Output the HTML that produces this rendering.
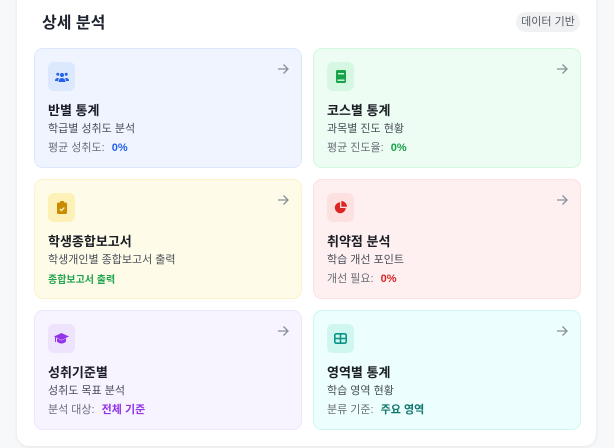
<!DOCTYPE html>
<html><head><meta charset="utf-8"><style>
*{box-sizing:border-box;margin:0;padding:0}
body{width:614px;height:448px;background:#f7f8fa;font-family:"Liberation Sans","Noto Sans CJK KR",sans-serif;position:relative;overflow:hidden}
.main{position:absolute;left:17px;top:-12px;width:579px;height:458px;background:#fff;border-radius:12px;box-shadow:0 1px 4px rgba(0,0,0,.08)}
h2{position:absolute;left:42px;top:9px;font-size:16px;font-weight:700;color:#1f2430}
.pill{position:absolute;left:516px;top:12px;width:64px;height:20px;border-radius:10px;background:#f0f1f3;color:#555b66;font-size:11px;line-height:20px;text-align:center}
.card{position:absolute;width:268px;height:120px;border-radius:9px;border:1px solid}
.ic{position:absolute;left:13px;top:13px;width:27px;height:29px;border-radius:6px;display:flex;align-items:center;justify-content:center}
.ar{position:absolute;right:12px;top:13px}
.t{position:absolute;left:13px;top:51px;font-size:13px;font-weight:700;color:#1a1d24}
.s{position:absolute;left:13px;top:71px;font-size:11px;color:#4a4f59}
.v{position:absolute;left:13px;top:90px;font-size:11px;color:#6b7079}
.v b{margin-left:4px}
</style></head><body>
<div class="main"></div>
<h2>상세 분석</h2>
<div class="pill">데이터 기반</div>

<div class="card" style="left:34px;top:48px;background:#eff4ff;border-color:#dce7fd">
<div class="ic" style="background:#dbe8fe"><svg width="14" height="10" viewBox="0 0 14 10"><g fill="#2563eb"><circle cx="7" cy="3" r="2"/><circle cx="2.8" cy="2.3" r="1.5"/><circle cx="11.2" cy="2.3" r="1.5"/><path d="M3.5 10c0-2.5 1.5-4 3.5-4s3.5 1.5 3.5 4z"/><path d="M0 9c0-2 1-3 2.8-3 .6 0 1 .1 1.3.3C3.4 7 3 8 3 9z"/><path d="M14 9c0-2-1-3-2.8-3-.6 0-1 .1-1.3.3.7.7 1.1 1.7 1.1 2.7z"/></g></svg></div>
<div class="ar"><svg width="12" height="12" viewBox="0 0 12 12"><path d="M1 6h10M6.5 1.5L11 6l-4.5 4.5" stroke="#8a8f99" stroke-width="1.3" fill="none"/></svg></div><div class="t">반별 통계</div><div class="s">학급별 성취도 분석</div><div class="v">평균 성취도: <b style="color:#2563eb">0%</b></div></div>

<div class="card" style="left:313px;top:48px;background:#edfdf3;border-color:#d3f8e0">
<div class="ic" style="background:#d6f8e3"><svg width="10" height="13" viewBox="0 0 10 13"><rect x="0" y="0" width="10" height="13" rx="1.5" fill="#16a34a"/><rect x="2" y="3" width="6" height="1.4" fill="#d6f8e3"/><rect x="1.5" y="9.5" width="7" height="1.4" fill="#d6f8e3"/></svg></div>
<div class="ar"><svg width="12" height="12" viewBox="0 0 12 12"><path d="M1 6h10M6.5 1.5L11 6l-4.5 4.5" stroke="#8a8f99" stroke-width="1.3" fill="none"/></svg></div><div class="t">코스별 통계</div><div class="s">과목별 진도 현황</div><div class="v">평균 진도율: <b style="color:#16a34a">0%</b></div></div>

<div class="card" style="left:34px;top:179px;background:#fefce8;border-color:#fdf3c6">
<div class="ic" style="background:#fdf1b8"><svg width="10" height="13" viewBox="0 0 10 13"><rect x="0" y="1.5" width="10" height="11.5" rx="1.5" fill="#ca8a04"/><rect x="3" y="0" width="4" height="3" rx="1" fill="#ca8a04"/><path d="M2.8 8l1.7 1.6L7.4 6.5" stroke="#fdf1b8" stroke-width="1.3" fill="none"/></svg></div>
<div class="ar"><svg width="12" height="12" viewBox="0 0 12 12"><path d="M1 6h10M6.5 1.5L11 6l-4.5 4.5" stroke="#8a8f99" stroke-width="1.3" fill="none"/></svg></div><div class="t">학생종합보고서</div><div class="s">학생개인별 종합보고서 출력</div><div class="v" style="font-size:10px;color:#22a34f;font-weight:700;top:91px">종합보고서 출력</div></div>

<div class="card" style="left:313px;top:179px;background:#fef0f0;border-color:#fde0e0">
<div class="ic" style="background:#fde1e1"><svg width="13" height="13" viewBox="0 0 13 13"><path d="M6 1.2A5.5 5.5 0 1 0 11.8 7H6z" fill="#dc2626"/><path d="M7.3 0v5.7H13A5.8 5.8 0 0 0 7.3 0z" fill="#dc2626"/></svg></div>
<div class="ar"><svg width="12" height="12" viewBox="0 0 12 12"><path d="M1 6h10M6.5 1.5L11 6l-4.5 4.5" stroke="#8a8f99" stroke-width="1.3" fill="none"/></svg></div><div class="t">취약점 분석</div><div class="s">학습 개선 포인트</div><div class="v">개선 필요: <b style="color:#dc2626">0%</b></div></div>

<div class="card" style="left:34px;top:310px;background:#f7f3ff;border-color:#ede6fd">
<div class="ic" style="background:#eee3fd"><svg width="15" height="11" viewBox="0 0 15 11"><path d="M7.5 0L15 3.5 7.5 7 0 3.5z" fill="#9333ea"/><path d="M3 5.3v3.2c1.2 1.3 2.8 2 4.5 2s3.3-.7 4.5-2V5.3L7.5 7.5z" fill="#9333ea"/><rect x="1" y="4" width="1" height="5" fill="#9333ea"/></svg></div>
<div class="ar"><svg width="12" height="12" viewBox="0 0 12 12"><path d="M1 6h10M6.5 1.5L11 6l-4.5 4.5" stroke="#8a8f99" stroke-width="1.3" fill="none"/></svg></div><div class="t">성취기준별</div><div class="s">성취도 목표 분석</div><div class="v">분석 대상: <b style="color:#9333ea">전체 기준</b></div></div>

<div class="card" style="left:313px;top:310px;background:#ecfefd;border-color:#cef7f3">
<div class="ic" style="background:#cff7ef"><svg width="13" height="11" viewBox="0 0 13 11"><rect x="0.8" y="0.8" width="11.4" height="9.4" rx="1.5" fill="none" stroke="#0d9488" stroke-width="1.6"/><path d="M6.5 1v9M1 5.5h11" stroke="#0d9488" stroke-width="1.6"/></svg></div>
<div class="ar"><svg width="12" height="12" viewBox="0 0 12 12"><path d="M1 6h10M6.5 1.5L11 6l-4.5 4.5" stroke="#8a8f99" stroke-width="1.3" fill="none"/></svg></div><div class="t">영역별 통계</div><div class="s">학습 영역 현황</div><div class="v">분류 기준: <b style="color:#0f766e">주요 영역</b></div></div>
</body></html>
